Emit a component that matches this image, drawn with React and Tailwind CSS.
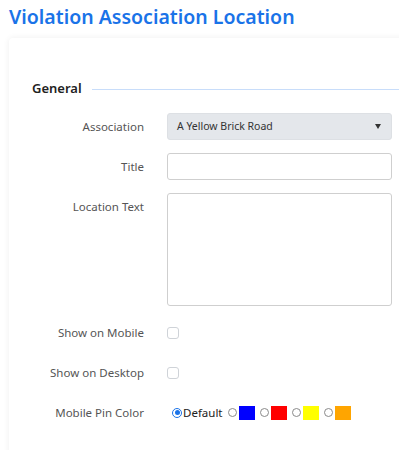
import React from 'react';

const font = { fontFamily: '"Noto Sans", "Open Sans", sans-serif' };

function Row({ label, children, tall }) {
  return (
    <div className={`flex items-start ${tall ? '' : 'h-[27px]'} mb-[13px]`}>
      <label className="w-[135px] shrink-0 text-right text-[11.5px] leading-[27px] text-[#555]">{label}</label>
      <div className="ml-[23px] w-[225px] shrink-0 flex items-center h-full">{children}</div>
    </div>
  );
}

function Checkbox() {
  return <span className="block w-[12px] h-[12px] rounded-[3px] border border-[#cfd3d8] bg-white" />;
}

function Radio({ checked }) {
  return checked ? (
    <span className="inline-block w-[10px] h-[10px] rounded-full border border-[#1a73e8] bg-white p-[1.5px]">
      <span className="block w-full h-full rounded-full bg-[#1a73e8]" />
    </span>
  ) : (
    <span className="inline-block w-[9px] h-[9px] rounded-full border border-[#8a8a8a] bg-white" />
  );
}

export default function App() {
  const swatches = ['bg-[#0000ff]', 'bg-[#ff0000]', 'bg-[#ffff00]', 'bg-[#ffa500]'];

  return (
    <div className="bg-white h-[450px] overflow-hidden pl-[9px] pt-[4px]" style={font}>
      <h1 className="text-[19.5px] leading-[26px] font-semibold text-[#1a73e8]">Violation Association Location</h1>

      <div className="mt-[8px] w-[430px] h-[430px] bg-white rounded-tl-[4px] shadow-[0_0_6px_rgba(0,0,0,0.07)] pt-[42px]">
        {/* General */}
        <div className="flex items-center pl-[23px] h-[18px]">
          <span className="text-[13px] font-semibold text-[#222]">General</span>
          <span className="ml-[10px] flex-1 h-px bg-[#c8ddfa]" />
        </div>

        <div className="mt-[15px]">
          <Row label="Association">
            <div className="w-full h-[27px] rounded-[3px] bg-[#e4e7eb] border border-[#dde0e4] flex items-center justify-between pl-[9px] pr-[10px]">
              <span className="text-[10.5px] text-[#333]">A Yellow Brick Road</span>
              <svg width="6" height="5" viewBox="0 0 6 5"><path d="M0 0h6L3 5z" fill="#333" /></svg>
            </div>
          </Row>
          <Row label="Title">
            <div className="w-full h-[27px] rounded-[3px] border border-[#cfcfcf] bg-white" />
          </Row>
          <Row label="Location Text" tall>
            <div className="w-full h-[113px] rounded-[3px] border border-[#cfcfcf] bg-white" />
          </Row>
          <Row label="Show on Mobile">
            <Checkbox />
          </Row>
          <Row label="Show on Desktop">
            <Checkbox />
          </Row>
          <Row label="Mobile Pin Color">
            <div className="flex items-center pl-[5px]">
              <Radio checked />
              <span className="ml-[1px] text-[11.5px] text-[#222]">Default</span>
              {swatches.map((c, i) => (
                <span key={i} className="flex items-center ml-[5px]">
                  <Radio />
                  <span className={`ml-[2px] w-[16px] h-[14px] ${c}`} />
                </span>
              ))}
            </div>
          </Row>
        </div>
      </div>
    </div>
  );
}
